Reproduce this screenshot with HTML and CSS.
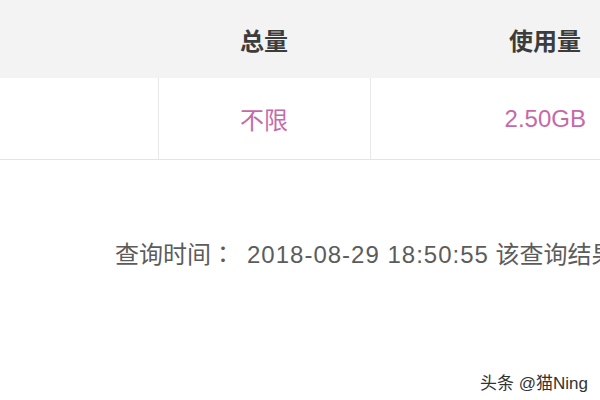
FILE: index.html
```html
<!DOCTYPE html>
<html>
<link rel="stylesheet" href="styles.css">

<head>
</head>

<body>
    <div class="page">
        <table class="usage-table">
            <tr class="head-row">
                <th class="col-name"></th>
                <th class="col-total">总量</th>
                <th class="col-used">使用量</th>
            </tr>
            <tr class="data-row">
                <td class="col-name"></td>
                <td class="col-total">不限</td>
                <td class="col-used">2.50GB</td>
            </tr>
        </table>
        <div class="query-time">查询时间<span class="colon">：</span><span class="stamp">2018-08-29 18:50:55</span> 该查询结果仅供参考</div>
        <div class="watermark">头条 @猫Ning</div>
    </div>
</body>

</html>
```

FILE: styles.css
```css
    body {
        margin: 0;
        background-color: #ffffff;
        font-family: "Liberation Sans", "Noto Sans CJK SC", sans-serif;
    }

    .page {
        position: relative;
        width: 600px;
        height: 400px;
        overflow: hidden;
    }

    .usage-table {
        border-collapse: collapse;
        table-layout: fixed;
        width: 720px;
    }

    .usage-table .col-name {
        width: 158px;
    }
    .usage-table .col-total {
        width: 212px;
    }

    .head-row th {
        height: 78px;
        padding: 0;
        background-color: #f3f3f3;
        color: #3c3c3c;
        font-size: 24px;
        font-weight: 700;
        text-align: center;
    }

    .data-row td {
        height: 81px;
        padding: 0;
        border-bottom: 1px solid #e4e4e4;
        border-left: 1px solid #e8e8e8;
        color: #c56aa9;
        font-size: 24px;
        text-align: center;
    }
    .data-row td:first-child {
        border-left: none;
    }

    .query-time {
        margin-top: 73px;
        padding-left: 115px;
        white-space: nowrap;
        color: #5c5c5c;
        font-size: 24px;
        line-height: 40px;
    }
    .query-time .colon {
        font-family: "Noto Sans CJK TC", sans-serif;
    }
    .query-time .stamp {
        margin-left: 12px;
        letter-spacing: 1px;
    }

    .watermark {
        position: absolute;
        right: 12px;
        bottom: 6px;
        color: #333333;
        font-size: 17px;
    }
```
